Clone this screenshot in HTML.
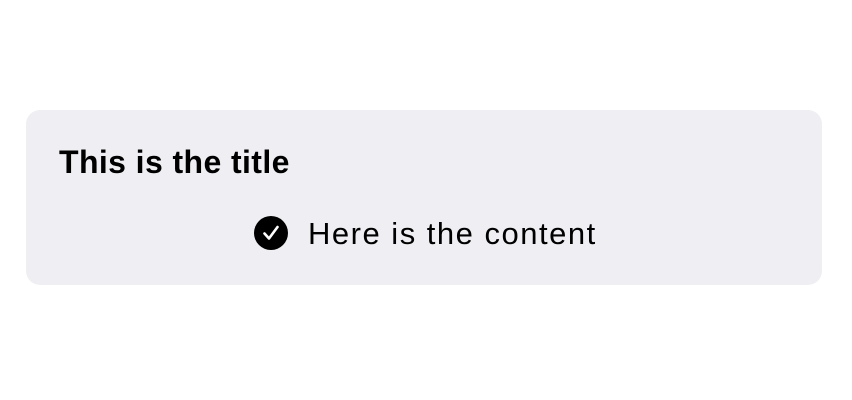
<!DOCTYPE html>
<html><head><style>
body{margin:0;width:852px;height:400px;background:#fff;position:relative;font-family:"Liberation Sans",sans-serif;}
.card{position:absolute;left:26px;top:110px;width:796px;height:175px;background:#efeef3;border-radius:14px;}
.t{position:absolute;left:59px;top:143px;font-size:32px;font-weight:bold;line-height:38px;letter-spacing:0.4px;color:#000;white-space:nowrap;}
.c{position:absolute;left:308px;top:215px;font-size:31px;line-height:38px;letter-spacing:1.5px;color:#000;white-space:nowrap;}
svg{position:absolute;left:254px;top:216px;}
</style></head><body>
<div class="card"></div>
<div class="t">This is the title</div>
<svg width="34" height="34" viewBox="0 0 34 34"><circle cx="17" cy="17" r="17" fill="#000"/><path d="M10.5 17.5 L15 22.5 L23.5 11" stroke="#fff" stroke-width="2.6" fill="none" stroke-linecap="round" stroke-linejoin="round"/></svg>
<div class="c">Here is the content</div>
</body></html>
